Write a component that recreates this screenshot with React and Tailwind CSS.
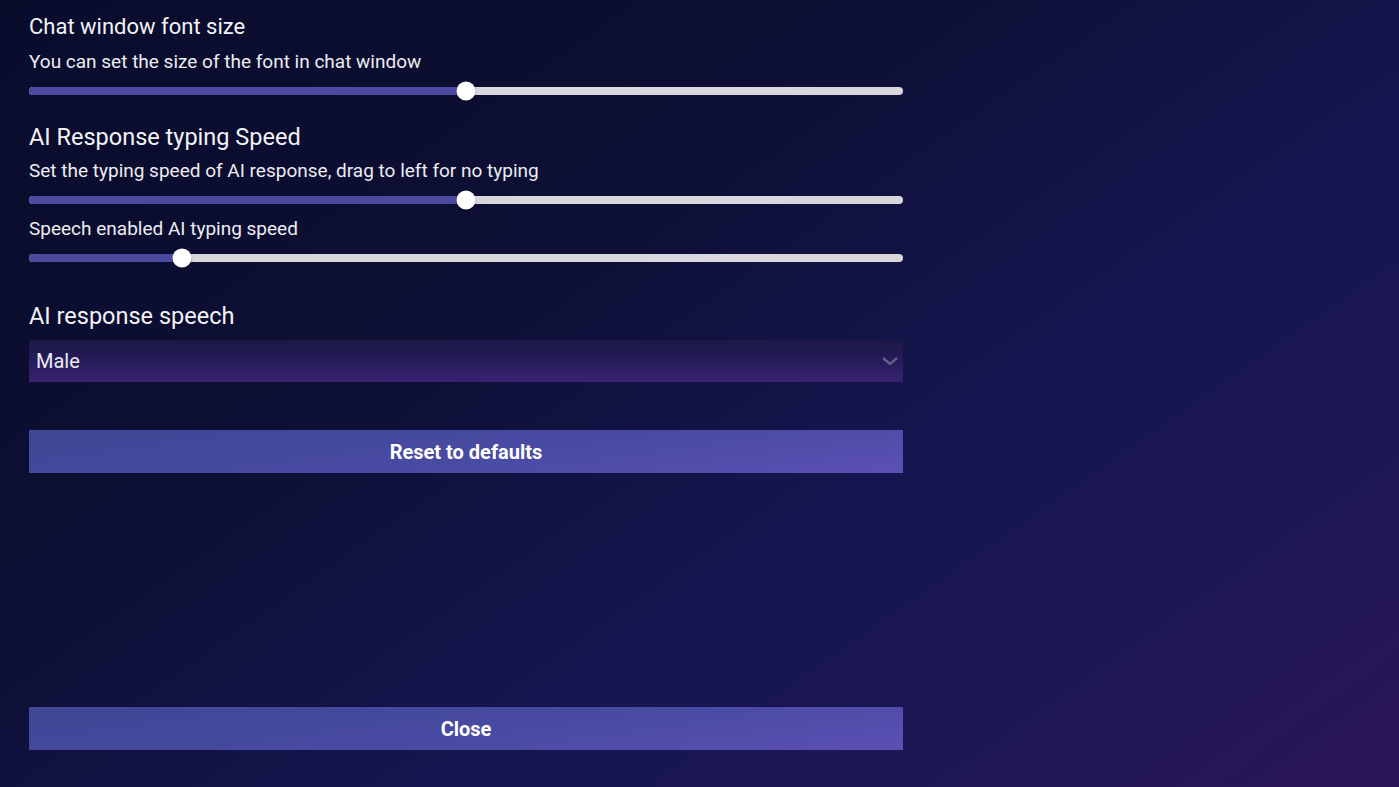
const sliders = [
  { value: 50 },
  { value: 50 },
  { value: 17.5 },
];

function Slider({ value }) {
  return (
    <div className="relative flex h-5 w-full items-center">
      <div className="h-[8px] w-full overflow-hidden rounded-full bg-[#d8d8dc]">
        <div className="h-full bg-[#4b4a9f]" style={{ width: `${value}%` }} />
      </div>
      <div
        className="absolute top-1/2 h-[19px] w-[19px] -translate-x-1/2 -translate-y-1/2 rounded-full bg-white shadow-[0_1px_2px_rgba(0,0,0,0.4)]"
        style={{ left: `${value}%` }}
      />
    </div>
  );
}

export default function App() {
  return (
    <div
      className="min-h-[787px] w-full bg-[linear-gradient(145deg,#0a0c2c_0%,#0d0f34_35%,#151650_62%,#1d1755_80%,#2c1657_100%)] text-white"
      style={{ fontFamily: "Roboto, 'Noto Sans', sans-serif" }}
    >
      <div className="flex w-[903px] flex-col pl-[29px] pt-[13px]">
        <h2 className="text-[22px] leading-[28px] text-[#f2f2f6]">Chat window font size</h2>
        <p className="mt-[9px] text-[19px] leading-[24px] text-[#ececf2]">
          You can set the size of the font in chat window
        </p>
        <div className="mt-[7px]">
          <Slider value={sliders[0].value} />
        </div>

        <h2 className="mt-[22px] text-[23.5px] leading-[28px] text-[#f2f2f6]">AI Response typing Speed</h2>
        <p className="mt-[8px] text-[19px] leading-[24px] text-[#ececf2]">
          Set the typing speed of AI response, drag to left for no typing
        </p>
        <div className="mt-[7px]">
          <Slider value={sliders[1].value} />
        </div>
        <p className="mt-[7px] text-[19px] leading-[24px] text-[#ececf2]">Speech enabled AI typing speed</p>
        <div className="mt-[7px]">
          <Slider value={sliders[2].value} />
        </div>

        <h2 className="mt-[34px] text-[23.5px] leading-[28px] text-[#f2f2f6]">AI response speech</h2>
        <div className="mt-[10px] flex h-[42px] items-center justify-between bg-[linear-gradient(180deg,#1b1846_0%,#271c5c_55%,#3a2272_100%)] pl-[7px] pr-[4px]">
          <span className="text-[20px] text-[#ececf2]">Male</span>
          <svg width="18" height="12" viewBox="0 0 18 12" fill="none">
            <path d="M2 3l7 6 7-6" stroke="#67617f" strokeWidth="2.4" />
          </svg>
        </div>

        <button className="mt-[48px] h-[43px] w-full bg-[linear-gradient(172deg,#3d4794_0%,#4a4ba4_60%,#5c50b4_100%)] text-[20px] font-bold text-white">
          Reset to defaults
        </button>

        <button className="mt-[234px] h-[43px] w-full bg-[linear-gradient(172deg,#3d4794_0%,#4a4ba4_60%,#5c50b4_100%)] text-[20px] font-bold text-white">
          Close
        </button>
      </div>
    </div>
  );
}
